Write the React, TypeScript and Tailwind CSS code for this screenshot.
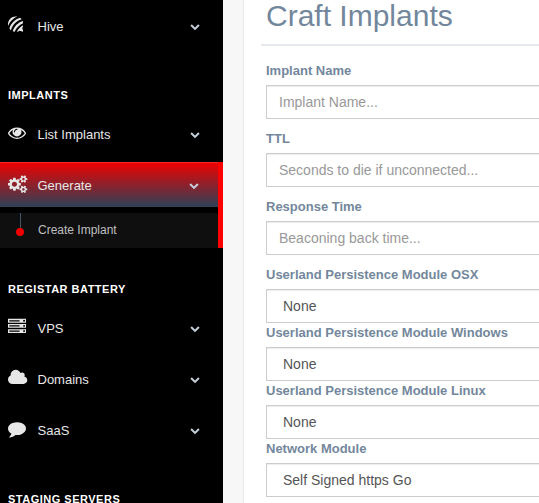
import React from "react";
import { FaForumbee } from "react-icons/fa";

const SMALL_COG =
  "v140q0 16-149 31-12 27-30 52 51 113 51 138 0 4-4 7-122 71-124 71-8 0-46-47t-52-68q-20 2-30 2t-30-2q-14 21-52 68t-46 47q-2 0-124-71-4-3-4-7 0-25 51-138-18-25-30-52-149-15-149-31v-140q0-16 149-31 13-29 30-52-51-113-51-138 0-4 4-7 4-2 35-20t59-34 30-16q8 0 46 46.500t52 67.500q20-2 30-2t30 2q51-71 92-112l6-2q4 0 124 70 4 3 4 7 0 25-51 138 17 23 30 52 149 15 149 31z";

const ICONS = {
  eye: {
    w: 1792,
    d: "M1664 960q-152-236-381-353 61 104 61 225 0 185-131.500 316.500t-316.500 131.500-316.500-131.500-131.500-316.500q0-121 61-225-229 117-381 353 133 205 333.500 326.500t434.500 121.500 434.500-121.500 333.500-326.500zm-720-384q0-20-14-34t-34-14q-125 0-214.500 89.500t-89.500 214.500q0 20 14 34t34 14 34-14 14-34q0-86 61-147t147-61q20 0 34-14t14-34zm848 384q0 34-20 69-140 230-376.500 368.500t-499.500 138.500-499.500-139-376.500-368q-20-35-20-69t20-69q140-229 376.500-368t499.500-139 499.500 139 376.500 368q20 35 20 69z",
  },
  cogs: {
    w: 1920,
    d:
      "M896 960q0-106-75-181t-181-75-181 75-75 181 75 181 181 75 181-75 75-181zm768 512q0-52-38-90t-90-38-90 38-38 90q0 53 37.500 90.500t90.500 37.500 90.500-37.500 37.500-90.500zm0-1024q0-52-38-90t-90-38-90 38-38 90q0 53 37.500 90.500t90.500 37.500 90.500-37.500 37.500-90.500zm-384 421v185q0 10-7 19.500t-16 10.500l-155 24q-11 35-32 76 34 48 90 115 7 11 7 20 0 12-7 19-23 30-82.500 89.500t-78.500 59.500q-11 0-21-7l-115-90q-37 19-77 31-11 108-23 155-7 24-30 24h-186q-11 0-20-7.500t-10-17.500l-23-153q-34-10-75-31l-118 89q-7 7-20 7-11 0-21-8-144-133-144-160 0-9 7-19 10-14 41-53t47-61q-23-44-35-82l-152-24q-10-1-17-9.500t-7-19.500v-185q0-10 7-19.500t16-10.500l155-24q11-35 32-76-34-48-90-115-7-11-7-20 0-12 7-20 22-30 82-89t79-59q11 0 21 7l115 90q34-18 77-32 11-108 23-154 7-24 30-24h186q11 0 20 7.500t10 17.500l23 153q34 10 75 31l118-89q8-7 20-7 11 0 21 8 144 133 144 160 0 8-7 19-12 16-42 54t-45 60q23 48 34 82l152 23q10 2 17 10.500t7 19.500z" +
      "M1920 1402" + SMALL_COG + "M1920 378" + SMALL_COG,
  },
  server: {
    w: 1792,
    d: "M128 1408h1024v-128h-1024v128zm0-512h1024v-128h-1024v128zm1568 448q0-40-28-68t-68-28-68 28-28 68 28 68 68 28 68-28 28-68zm-1568-960h1024v-128h-1024v128zm1568 448q0-40-28-68t-68-28-68 28-28 68 28 68 68 28 68-28 28-68zm0-512q0-40-28-68t-68-28-68 28-28 68 28 68 68 28 68-28 28-68zm96 832v384h-1792v-384h1792zm0-512v384h-1792v-384h1792zm0-512v384h-1792v-384h1792z",
  },
  cloud: {
    w: 1920,
    d: "M1920 1152q0 159-112.500 271.500t-271.500 112.500h-1088q-185 0-316.500-131.500t-131.500-316.500q0-132 71-241.500t187-163.500q-2-28-2-43 0-212 150-362t362-150q158 0 286.500 88t187.500 230q70-62 166-62 106 0 181 75t75 181q0 75-41 138 129 30 213 134.500t84 239.500z",
  },
  comment: {
    w: 1792,
    d: "M1792 896q0 174-120 321.500t-326 233-450 85.500q-70 0-145-8-198 175-460 242-49 14-114 22-17 2-30.500-9t-17.500-29v-1q-3-4-.5-12t2-10 4.500-9.500l6-9 7-8.500 8-9q7-8 31-34.500t34.500-38 31-39.500 32.500-51 27-59 26-76q-157-89-247.500-220t-90.500-281q0-130 71-248.500t191-204.500 286-136.500 348-50.500q244 0 450 85.500t326 233 120 321.500z",
  },
};

function Icon({ name }: { name: keyof typeof ICONS }) {
  const { w, d } = ICONS[name];
  return (
    <svg viewBox={`0 43 ${w} 1792`} width={(w / 1792) * 18} height={18} fill="currentColor" overflow="visible">
      <path d={d} />
    </svg>
  );
}

function Chevron() {
  return (
    <svg viewBox="0 -77 1792 1792" width={10} height={10} className="mt-px text-[#c4cfda]" fill="currentColor">
      <path d="M1683 808l-742 741q-19 19-45 19t-45-19l-742-741q-19-19-19-45.500t19-45.500l166-165q19-19 45-19t45 19l531 531 531-531q19-19 45-19t45 19l166 165q19 19 19 45.500t-19 45.500z" />
    </svg>
  );
}

type ItemProps = { icon: React.ReactNode; label: string; active?: boolean };

function MenuItem({ icon, label, active }: ItemProps) {
  return (
    <div
      className={
        active
          ? "flex h-[45px] items-center border-r-[5px] border-[#ff0000] bg-linear-to-b/srgb from-[#f00000] to-[#2c4257] pr-[19px] pl-2 shadow-[inset_0_1px_0_rgba(255,255,255,0.16)]"
          : "flex h-[45px] shrink-0 items-center pr-[23px] pl-2"
      }
    >
      <span className="mb-[1.86px] w-[29.5px] text-[#e7e7e7]">{icon}</span>
      <span className="flex-1 pt-0.5 text-[13px] leading-[19px] text-[#e7e7e7]">{label}</span>
      <Chevron />
    </div>
  );
}

function Heading({ children }: { children: React.ReactNode }) {
  return <h3 className="pl-2 text-[11px] leading-4 font-bold tracking-[0.5px] text-white">{children}</h3>;
}

function Sidebar() {
  return (
    <aside className="flex w-[223px] shrink-0 flex-col bg-black pt-[3px]">
      <MenuItem icon={<FaForumbee className="-mt-px h-[18px] w-[15.4px]" />} label="Hive" />
      <div className="mt-[39px]"><Heading>IMPLANTS</Heading></div>
      <div className="mt-2 flex flex-col gap-1.5">
        <MenuItem icon={<Icon name="eye" />} label="List Implants" />
        <div>
          <MenuItem icon={<Icon name="cogs" />} label="Generate" active />
          <div className="border-r-[5px] border-[#ff0000] pt-1.5">
            <div className="flex h-[35px] bg-[#0f0f0f]">
              <div className="ml-4 flex w-2 flex-col items-center">
                <span className="h-[15px] w-px bg-[#425668]" />
                <span className="size-2 rounded-full bg-[#ee0000]" />
              </div>
              <span className="ml-3.5 pt-[9px] text-xs leading-4 text-[#bfbfbf]">Create Implant</span>
            </div>
          </div>
        </div>
      </div>
      <div className="mt-[33px]"><Heading>REGISTAR BATTERY</Heading></div>
      <div className="mt-2 flex flex-col gap-1.5">
        <MenuItem icon={<Icon name="server" />} label="VPS" />
        <MenuItem icon={<Icon name="cloud" />} label="Domains" />
        <MenuItem icon={<Icon name="comment" />} label="SaaS" />
      </div>
      <div className="mt-[39px]"><Heading>STAGING SERVERS</Heading></div>
    </aside>
  );
}

const inputBox =
  "block h-[34px] w-full border border-[#cccccc] bg-white text-sm leading-5 shadow-[inset_0_1px_1px_rgba(0,0,0,0.075)] outline-none";

function TextField({ label, placeholder }: { label: string; placeholder: string }) {
  return (
    <label className="mb-2.5 block">
      <span className="mb-[5px] block text-[13px] leading-[19px] font-bold">{label}</span>
      <input className={`${inputBox} px-3 placeholder:text-[#999999]`} placeholder={placeholder} />
    </label>
  );
}

function SelectField({ label, value }: { label: string; value: string }) {
  return (
    <label className="block">
      <span className="mb-[5px] block text-[13px] leading-[19px] font-bold">{label}</span>
      <select className={`${inputBox} appearance-none px-4 text-[#555555]`}>
        <option>{value}</option>
      </select>
    </label>
  );
}

export default function App() {
  return (
    <div className="flex h-[503px] w-full overflow-hidden bg-[#f7f7f7] font-['Liberation_Sans',Arial,sans-serif]">
      <Sidebar />
      <main className="ml-5 w-[420px] shrink-0 border-l border-[#e6e9ed] bg-white pl-[17px] text-[#73879c]">
        <h1 className="h-11 pl-[5px] text-[30px] leading-[31px]">Craft Implants</h1>
        <div className="h-0.5 bg-[#e6e9ed]" />
        <form className="pt-[15px] pl-[5px]">
          <TextField label="Implant Name" placeholder="Implant Name..." />
          <TextField label="TTL" placeholder="Seconds to die if unconnected..." />
          <TextField label="Response Time" placeholder="Beaconing back time..." />
          <SelectField label="Userland Persistence Module OSX" value="None" />
          <SelectField label="Userland Persistence Module Windows" value="None" />
          <SelectField label="Userland Persistence Module Linux" value="None" />
          <SelectField label="Network Module" value="Self Signed https Go" />
        </form>
      </main>
    </div>
  );
}
